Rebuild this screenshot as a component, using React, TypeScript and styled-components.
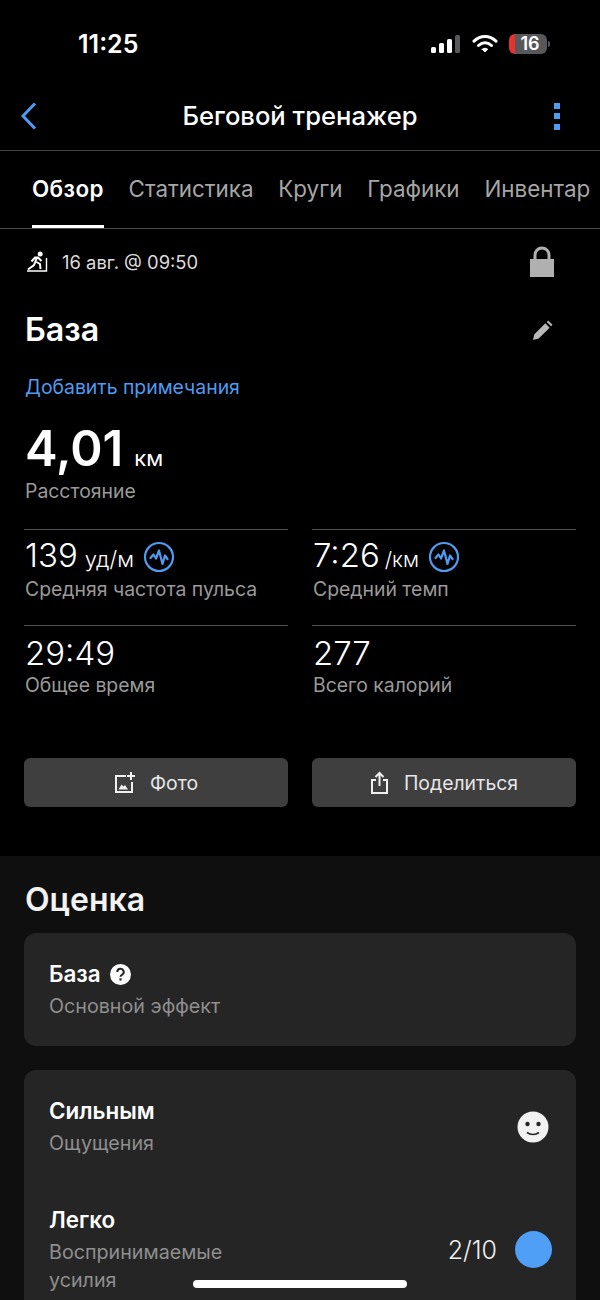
import React from "react";
import styled, { createGlobalStyle } from "styled-components";

const Global = createGlobalStyle`
  html, body { margin: 0; padding: 0; background: #000; }
  body { font-family: Inter, "Noto Sans", sans-serif; -webkit-font-smoothing: antialiased; }
  * { box-sizing: border-box; }
`;

const Page = styled.div`
  width: 600px;
  height: 1300px;
  overflow: hidden;
  background: #000;
  position: relative;
  color: #fff;
`;

const StatusBar = styled.div`
  height: 82px;
  padding: 29px 53px 0 78px;
  display: flex;
  justify-content: space-between;
  align-items: flex-start;
`;
const Clock = styled.div`
  font-size: 25px;
  line-height: 30px;
  font-weight: 600;
`;
const StatusIcons = styled.div`
  display: flex;
  align-items: center;
  gap: 11px;
  height: 30px;
`;
const Battery = styled.div`
  width: 38px;
  height: 20px;
  border-radius: 6px;
  background: linear-gradient(90deg, #e8332c 0 6px, #57585a 6px);
  font-size: 18px;
  font-weight: 600;
  line-height: 20px;
  text-align: center;
  padding-left: 4px;
  position: relative;
  &::after {
    content: "";
    position: absolute;
    right: -3px;
    top: 7px;
    width: 2px;
    height: 6px;
    border-radius: 0 2px 2px 0;
    background: #57585a;
  }
`;

const Header = styled.header`
  height: 69px;
  padding: 0 39px 0 20px;
  display: flex;
  align-items: center;
  justify-content: space-between;
  border-bottom: 1px solid #444;
`;
const HeaderSide = styled.div<{ $end?: boolean }>`
  width: 20px;
  display: flex;
  justify-content: ${(p) => (p.$end ? "flex-end" : "flex-start")};
`;
const HeaderTitle = styled.h1`
  margin: 0;
  font-size: 25.6px;
  font-weight: 500;
  line-height: 30px;
  padding-left: 19px;
`;

const Tabs = styled.nav`
  height: 78px;
  padding: 0 0 0 32px;
  display: flex;
  gap: 24.8px;
  border-bottom: 1px solid #4a4a4a;
  white-space: nowrap;
  overflow: hidden;
`;
const Tab = styled.div<{ $active?: boolean }>`
  height: 77px;
  padding-top: 24px;
  font-size: 22.4px;
  line-height: 28px;
  font-weight: ${(p) => (p.$active ? 600 : 400)};
  letter-spacing: ${(p) => (p.$active ? "0.4px" : "0")};
  color: ${(p) => (p.$active ? "#fff" : "#a6a6a6")};
  border-bottom: ${(p) => (p.$active ? "3px solid #fff" : "none")};
`;

const Summary = styled.section`
  height: 627px;
  padding: 0 24px;
`;
const MetaRow = styled.div`
  height: 66px;
  display: flex;
  align-items: center;
  padding-left: 3px;
  padding-right: 21px;
  gap: 14px;
`;
const MetaText = styled.span`
  font-size: 18.4px;
  line-height: 24px;
  color: #dcdcdc;
  flex: 1;
`;
const SummaryText = styled.div`
  padding-left: 1px;
`;
const TitleRow = styled.div`
  display: flex;
  align-items: center;
  justify-content: space-between;
  height: 48px;
  margin-top: 11px;
  padding-right: 23px;
`;
const ActivityTitle = styled.h2`
  margin: 0;
  font-size: 32.2px;
  line-height: 48px;
  font-weight: 600;
`;
const NotesLink = styled.div`
  margin-top: 21px;
  font-size: 19.4px;
  line-height: 24px;
  color: #4f9bf0;
`;
const BigValue = styled.div`
  margin-top: 29px;
  display: flex;
  align-items: baseline;
  gap: 11px;
  font-size: 49px;
  line-height: 41px;
  font-weight: 600;
`;
const BigUnit = styled.span`
  font-size: 22px;
  font-weight: 400;
`;
const StatLabel = styled.div`
  font-size: 19.4px;
  line-height: 24px;
  color: #9a9a9a;
`;
const StatGrid = styled.div`
  margin-top: 26px;
  display: grid;
  grid-template-columns: 264px 264px;
  column-gap: 24px;
`;
const StatCell = styled.div`
  height: 96px;
  border-top: 1px solid #505050;
  padding: 7px 0 0 1px;
`;
const StatValue = styled.div`
  display: flex;
  align-items: center;
  gap: 9px;
  height: 40px;
  font-size: 33px;
  line-height: 40px;
  font-weight: 350;
`;
const StatUnit = styled.span<{ $tight?: boolean }>`
  font-size: ${(p) => (p.$tight ? 21 : 22)}px;
  margin-left: ${(p) => (p.$tight ? 5 : 7)}px;
`;
const ButtonRow = styled.div`
  margin-top: 37px;
  display: grid;
  grid-template-columns: 264px 264px;
  column-gap: 24px;
`;
const ActionButton = styled.div`
  height: 49px;
  border-radius: 6px;
  background: #3f3f3f;
  display: flex;
  align-items: center;
  justify-content: center;
  gap: 14px;
  font-size: 19.4px;
  color: #e6e6e6;
`;

const Rating = styled.section`
  background: #0f0f0f;
  padding: 24px 24px 0;
  height: 446px;
`;
const RatingTitle = styled.h2`
  margin: 0 0 13px 1px;
  font-size: 32px;
  line-height: 40px;
  font-weight: 600;
  color: #f2f2f2;
`;
const Card = styled.div`
  background: #252525;
  border-radius: 12px;
  padding: 26px 24px 26px 25px;
  margin-bottom: 24px;
  display: flex;
  flex-direction: column;
  gap: 48px;
`;
const CardRow = styled.div`
  display: flex;
  justify-content: space-between;
  align-items: center;
`;
const CardTitle = styled.div`
  font-size: 22.4px;
  line-height: 30px;
  font-weight: 600;
  display: flex;
  align-items: center;
  gap: 9px;
`;
const CardSub = styled.div`
  font-size: 19.7px;
  line-height: 28px;
  color: #8f8f8f;
  margin-top: 3px;
  max-width: 200px;
`;
const CardEnd = styled.div`
  display: flex;
  align-items: center;
  gap: 18px;
  font-size: 25px;
  font-weight: 350;
  color: #f0f0f0;
`;
const SmileIcon = styled.svg`
  margin-right: 3px;
`;
const Dot = styled.div`
  width: 37px;
  height: 37px;
  border-radius: 50%;
  background: #4e9ff5;
`;
const HomeBar = styled.div`
  position: absolute;
  left: 193px;
  top: 1280px;
  width: 214px;
  height: 8px;
  border-radius: 4px;
  background: #fff;
`;

const Pulse = () => (
  <svg width="32" height="32" viewBox="0 0 32 32" fill="none">
    <circle cx="16" cy="16" r="14" stroke="#4f9bf0" strokeWidth="2.2" />
    <path d="M7.5 17l3-3.5 2.5 4 3-8 3.5 13.5 2.5-8.5 2.5 3.5" stroke="#4f9bf0" strokeWidth="2.2" strokeLinejoin="round" strokeLinecap="round" />
  </svg>
);

export default function App() {
  return (
    <Page>
      <Global />
      <StatusBar>
        <Clock>11:25</Clock>
        <StatusIcons>
          <svg width="30" height="20" viewBox="0 0 30 20">
            <rect x="0" y="13" width="5" height="6" rx="1.5" fill="#fff" />
            <rect x="8" y="9" width="5" height="10" rx="1.5" fill="#fff" />
            <rect x="16" y="5" width="5" height="14" rx="1.5" fill="#fff" />
            <rect x="24" y="1" width="5" height="18" rx="1.5" fill="#58595b" />
          </svg>
          <svg width="26" height="20" viewBox="0 0 26 20" fill="none" stroke="#fff" strokeLinecap="round">
            <path d="M2 7.2C8.5 1 17.5 1 24 7.2" strokeWidth="3" />
            <path d="M6.5 11.5c4-3.6 9-3.6 13 0" strokeWidth="3" />
            <path d="M10.2 15.3L13 18l2.8-2.7c-1.7-1.4-3.9-1.4-5.6 0z" fill="#fff" strokeWidth="1" />
          </svg>
          <Battery>16</Battery>
        </StatusIcons>
      </StatusBar>

      <Header>
        <HeaderSide>
          <svg width="18" height="28" viewBox="0 0 18 28" fill="none">
            <path d="M15 1.5L3 14l12 12.5" stroke="#4f9bf0" strokeWidth="3" />
          </svg>
        </HeaderSide>
        <HeaderTitle>Беговой тренажер</HeaderTitle>
        <HeaderSide $end>
          <svg width="8" height="30" viewBox="0 0 8 30">
            <rect x="1" y="2" width="6" height="6" fill="#4f9bf0" />
            <rect x="1" y="12" width="6" height="6" fill="#4f9bf0" />
            <rect x="1" y="23" width="6" height="6" fill="#4f9bf0" />
          </svg>
        </HeaderSide>
      </Header>

      <Tabs>
        <Tab $active>Обзор</Tab>
        <Tab>Статистика</Tab>
        <Tab>Круги</Tab>
        <Tab>Графики</Tab>
        <Tab>Инвентар</Tab>
      </Tabs>

      <Summary>
        <MetaRow>
          <svg width="21" height="22" viewBox="0 0 21 22" fill="none" stroke="#fff">
            <circle cx="13.2" cy="3" r="2.5" fill="#fff" stroke="none" />
            <path d="M10 6.5L7 14l-6 4.5M9.5 11l3.5 2 .5 5M4.5 10.5L8 6.5h3l3.5 3.5" strokeWidth="2" />
            <path d="M0 20h19.5V7" strokeWidth="1.4" />
          </svg>
          <MetaText>16 авг. @ 09:50</MetaText>
          <svg width="26" height="32" viewBox="0 0 26 32" fill="#b0b0b0">
            <path d="M6 14V9a7 7 0 0 1 14 0v5" fill="none" stroke="#b0b0b0" strokeWidth="3" />
            <rect x="1" y="13" width="24" height="18" />
          </svg>
        </MetaRow>
        <SummaryText>
          <TitleRow>
            <ActivityTitle>База</ActivityTitle>
            <svg width="21" height="21" viewBox="0 0 22 22" fill="#b8b8b8">
              <path d="M1 21l1.5-6L14 3.5l4.5 4.5L7 19.5zM15.5 2l1.5-1.5 4.5 4.5L20 6.5z" />
            </svg>
          </TitleRow>
          <NotesLink>Добавить примечания</NotesLink>
          <BigValue>
            4,01<BigUnit>км</BigUnit>
          </BigValue>
          <StatLabel>Расстояние</StatLabel>
        </SummaryText>
        <StatGrid>
          <StatCell>
            <StatValue>
              <span>139<StatUnit>уд/м</StatUnit></span>
              <Pulse />
            </StatValue>
            <StatLabel>Средняя частота пульса</StatLabel>
          </StatCell>
          <StatCell>
            <StatValue>
              <span>7:26<StatUnit $tight>/км</StatUnit></span>
              <Pulse />
            </StatValue>
            <StatLabel>Средний темп</StatLabel>
          </StatCell>
          <StatCell>
            <StatValue>29:49</StatValue>
            <StatLabel>Общее время</StatLabel>
          </StatCell>
          <StatCell>
            <StatValue>277</StatValue>
            <StatLabel>Всего калорий</StatLabel>
          </StatCell>
        </StatGrid>
        <ButtonRow>
          <ActionButton>
            <svg width="22" height="22" viewBox="0 0 22 22" fill="none" stroke="#f0f0f0" strokeWidth="2">
              <path d="M12 4H2v16h16V10" />
              <path d="M17 0v8M13 4h8" />
              <path d="M4.5 17.5l3-5 2 2 1.5-1.5 3 4.5z" fill="#f0f0f0" stroke="none" />
            </svg>
            Фото
          </ActionButton>
          <ActionButton>
            <svg width="20" height="24" viewBox="0 0 20 24" fill="none" stroke="#f0f0f0" strokeWidth="2">
              <path d="M6 9H2v13h15V9h-4" />
              <path d="M9.5 15V2M5.5 6l4-4 4 4" />
            </svg>
            Поделиться
          </ActionButton>
        </ButtonRow>
      </Summary>

      <Rating>
        <RatingTitle>Оценка</RatingTitle>
        <Card>
          <div>
            <CardTitle>
              База
              <svg width="21" height="21" viewBox="0 0 21 21">
                <circle cx="10.5" cy="10.5" r="10.5" fill="#fff" />
                <path d="M7.3 8a3.2 3.2 0 1 1 4.7 2.8c-1 .6-1.5 1-1.5 2" fill="none" stroke="#252525" strokeWidth="2" />
                <rect x="9.4" y="14.3" width="2.2" height="2.2" fill="#252525" />
              </svg>
            </CardTitle>
            <CardSub>Основной эффект</CardSub>
          </div>
        </Card>
        <Card>
          <CardRow>
            <div>
              <CardTitle>Сильным</CardTitle>
              <CardSub>Ощущения</CardSub>
            </div>
            <CardEnd>
              <SmileIcon width="32" height="32" viewBox="0 0 32 32">
                <circle cx="16" cy="16" r="15.5" fill="#f2f2f2" />
                <circle cx="10.5" cy="13" r="2.2" fill="#252525" />
                <circle cx="21.5" cy="13" r="2.2" fill="#252525" />
                <path d="M10 21.5c3.5 2.5 8.5 2.5 12 0" fill="none" stroke="#252525" strokeWidth="1.8" />
              </SmileIcon>
            </CardEnd>
          </CardRow>
          <CardRow>
            <div>
              <CardTitle>Легко</CardTitle>
              <CardSub>Воспринимаемые усилия</CardSub>
            </div>
            <CardEnd>
              2/10
              <Dot />
            </CardEnd>
          </CardRow>
        </Card>
      </Rating>
      <HomeBar />
    </Page>
  );
}
